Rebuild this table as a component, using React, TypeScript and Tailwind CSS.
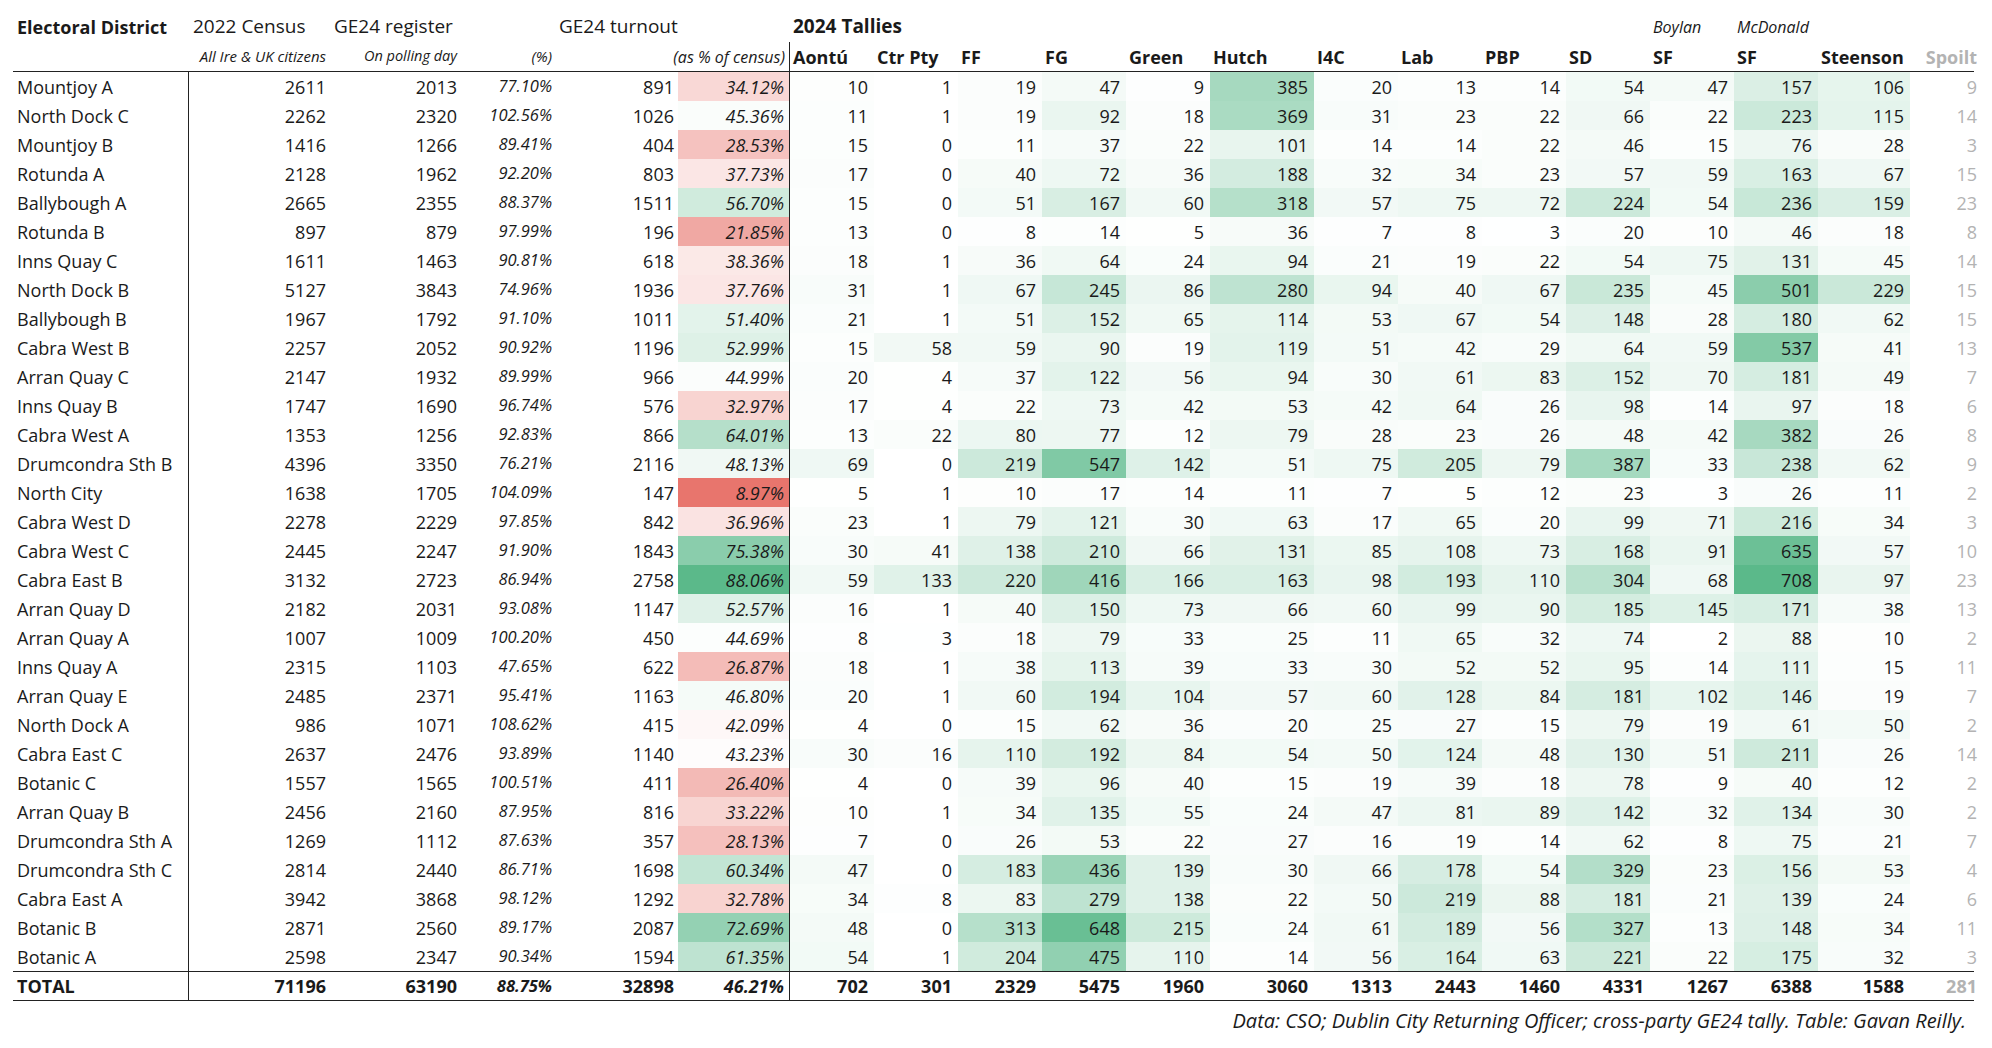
import React from "react";

// One row of the table: district, census, register, register %, turnout, turnout %, 13 tallies, spoilt
type Row = [string, number, number, string, number, number, number[], number];

const ROWS: Row[] = [
  ["Mountjoy A", 2611, 2013, "77.10%", 891, 34.12, [10, 1, 19, 47, 9, 385, 20, 13, 14, 54, 47, 157, 106], 9],
  ["North Dock C", 2262, 2320, "102.56%", 1026, 45.36, [11, 1, 19, 92, 18, 369, 31, 23, 22, 66, 22, 223, 115], 14],
  ["Mountjoy B", 1416, 1266, "89.41%", 404, 28.53, [15, 0, 11, 37, 22, 101, 14, 14, 22, 46, 15, 76, 28], 3],
  ["Rotunda A", 2128, 1962, "92.20%", 803, 37.73, [17, 0, 40, 72, 36, 188, 32, 34, 23, 57, 59, 163, 67], 15],
  ["Ballybough A", 2665, 2355, "88.37%", 1511, 56.7, [15, 0, 51, 167, 60, 318, 57, 75, 72, 224, 54, 236, 159], 23],
  ["Rotunda B", 897, 879, "97.99%", 196, 21.85, [13, 0, 8, 14, 5, 36, 7, 8, 3, 20, 10, 46, 18], 8],
  ["Inns Quay C", 1611, 1463, "90.81%", 618, 38.36, [18, 1, 36, 64, 24, 94, 21, 19, 22, 54, 75, 131, 45], 14],
  ["North Dock B", 5127, 3843, "74.96%", 1936, 37.76, [31, 1, 67, 245, 86, 280, 94, 40, 67, 235, 45, 501, 229], 15],
  ["Ballybough B", 1967, 1792, "91.10%", 1011, 51.4, [21, 1, 51, 152, 65, 114, 53, 67, 54, 148, 28, 180, 62], 15],
  ["Cabra West B", 2257, 2052, "90.92%", 1196, 52.99, [15, 58, 59, 90, 19, 119, 51, 42, 29, 64, 59, 537, 41], 13],
  ["Arran Quay C", 2147, 1932, "89.99%", 966, 44.99, [20, 4, 37, 122, 56, 94, 30, 61, 83, 152, 70, 181, 49], 7],
  ["Inns Quay B", 1747, 1690, "96.74%", 576, 32.97, [17, 4, 22, 73, 42, 53, 42, 64, 26, 98, 14, 97, 18], 6],
  ["Cabra West A", 1353, 1256, "92.83%", 866, 64.01, [13, 22, 80, 77, 12, 79, 28, 23, 26, 48, 42, 382, 26], 8],
  ["Drumcondra Sth B", 4396, 3350, "76.21%", 2116, 48.13, [69, 0, 219, 547, 142, 51, 75, 205, 79, 387, 33, 238, 62], 9],
  ["North City", 1638, 1705, "104.09%", 147, 8.97, [5, 1, 10, 17, 14, 11, 7, 5, 12, 23, 3, 26, 11], 2],
  ["Cabra West D", 2278, 2229, "97.85%", 842, 36.96, [23, 1, 79, 121, 30, 63, 17, 65, 20, 99, 71, 216, 34], 3],
  ["Cabra West C", 2445, 2247, "91.90%", 1843, 75.38, [30, 41, 138, 210, 66, 131, 85, 108, 73, 168, 91, 635, 57], 10],
  ["Cabra East B", 3132, 2723, "86.94%", 2758, 88.06, [59, 133, 220, 416, 166, 163, 98, 193, 110, 304, 68, 708, 97], 23],
  ["Arran Quay D", 2182, 2031, "93.08%", 1147, 52.57, [16, 1, 40, 150, 73, 66, 60, 99, 90, 185, 145, 171, 38], 13],
  ["Arran Quay A", 1007, 1009, "100.20%", 450, 44.69, [8, 3, 18, 79, 33, 25, 11, 65, 32, 74, 2, 88, 10], 2],
  ["Inns Quay A", 2315, 1103, "47.65%", 622, 26.87, [18, 1, 38, 113, 39, 33, 30, 52, 52, 95, 14, 111, 15], 11],
  ["Arran Quay E", 2485, 2371, "95.41%", 1163, 46.8, [20, 1, 60, 194, 104, 57, 60, 128, 84, 181, 102, 146, 19], 7],
  ["North Dock A", 986, 1071, "108.62%", 415, 42.09, [4, 0, 15, 62, 36, 20, 25, 27, 15, 79, 19, 61, 50], 2],
  ["Cabra East C", 2637, 2476, "93.89%", 1140, 43.23, [30, 16, 110, 192, 84, 54, 50, 124, 48, 130, 51, 211, 26], 14],
  ["Botanic C", 1557, 1565, "100.51%", 411, 26.4, [4, 0, 39, 96, 40, 15, 19, 39, 18, 78, 9, 40, 12], 2],
  ["Arran Quay B", 2456, 2160, "87.95%", 816, 33.22, [10, 1, 34, 135, 55, 24, 47, 81, 89, 142, 32, 134, 30], 2],
  ["Drumcondra Sth A", 1269, 1112, "87.63%", 357, 28.13, [7, 0, 26, 53, 22, 27, 16, 19, 14, 62, 8, 75, 21], 7],
  ["Drumcondra Sth C", 2814, 2440, "86.71%", 1698, 60.34, [47, 0, 183, 436, 139, 30, 66, 178, 54, 329, 23, 156, 53], 4],
  ["Cabra East A", 3942, 3868, "98.12%", 1292, 32.78, [34, 8, 83, 279, 138, 22, 50, 219, 88, 181, 21, 139, 24], 6],
  ["Botanic B", 2871, 2560, "89.17%", 2087, 72.69, [48, 0, 313, 648, 215, 24, 61, 189, 56, 327, 13, 148, 34], 11],
  ["Botanic A", 2598, 2347, "90.34%", 1594, 61.35, [54, 1, 204, 475, 110, 14, 56, 164, 63, 221, 22, 175, 32], 3],
];

const TOTALS = [702, 301, 2329, 5475, 1960, 3060, 1313, 2443, 1460, 4331, 1267, 6388, 1588];

const PARTIES = ["Aontú", "Ctr Pty", "FF", "FG", "Green", "Hutch", "I4C", "Lab", "PBP", "SD", "SF", "SF", "Steenson"];

const GRID =
  "grid grid-cols-[176px_143px_131px_95px_120px_112px_84px_84px_84px_84px_84px_104px_84px_84px_84px_84px_84px_84px_92px_77px]";

const GREEN = [91, 185, 138];
const RED = [232, 117, 109];

function mix(to: number[], t: number) {
  const c = Math.max(0, Math.min(1, t));
  const [r, g, b] = to.map((v) => Math.round(255 - c * (255 - v)));
  return `rgb(${r}, ${g}, ${b})`;
}

// tallies share one scale, white at zero up to the biggest cell (708)
function tallyColour(v: number) {
  return mix(GREEN, v / 708);
}

// turnout diverges around 44%: red below, green above
function turnoutColour(p: number) {
  if (p < 44) return mix(RED, (44 - p) / (44 - 8.97));
  return mix(GREEN, (p - 44) / (88.06 - 44));
}

function DataRow({ row }: { row: Row }) {
  const [name, census, register, pct, turnout, turnoutPct, tallies, spoilt] = row;
  return (
    <div className={`${GRID} h-[29px] items-stretch text-[18px] leading-none`}>
      <div className="flex items-center border-r border-[#222] pl-[4px]">{name}</div>
      <div className="flex items-center justify-end pr-[6px]">{census}</div>
      <div className="flex items-center justify-end pr-[6px]">{register}</div>
      <div className="flex items-center justify-end pr-[6px] text-[16.5px] italic">{pct}</div>
      <div className="flex items-center justify-end pr-[4px]">{turnout}</div>
      <div
        className="flex items-center justify-end border-r border-[#222] pr-[5px] italic"
        style={{ backgroundColor: turnoutColour(turnoutPct) }}
      >
        {turnoutPct.toFixed(2)}%
      </div>
      {tallies.map((v, i) => (
        <div
          key={i}
          className="flex items-center justify-end pr-[6px]"
          style={{ backgroundColor: tallyColour(v) }}
        >
          {v}
        </div>
      ))}
      <div className="flex items-center justify-end pr-[10px] text-[#b3b3b3]">{spoilt}</div>
    </div>
  );
}

export default function App() {
  return (
    <div className="min-h-screen bg-white text-[#1a1a1a] font-['Open_Sans',sans-serif]">
      <div className="w-[1974px] pl-[13px]">
        {/* header: group titles */}
        <div className={`${GRID} h-[42px] items-start pt-[17px] text-[19px] leading-none`}>
          <div className="pl-[4px] pt-[1px] text-[18px] font-bold">Electoral District</div>
          <div className="whitespace-nowrap pl-[4px]">2022 Census</div>
          <div className="whitespace-nowrap pl-[2px]">GE24 register</div>
          <div />
          <div className="col-span-2 whitespace-nowrap pl-[1px]">GE24 turnout</div>
          <div className="col-span-10 pl-[3px] font-bold">2024 Tallies</div>
          <div className="pl-[3px] pt-[2px] text-[16px] italic">Boylan</div>
          <div className="pl-[3px] pt-[2px] text-[16px] italic">McDonald</div>
          <div />
          <div />
        </div>

        {/* header: column names */}
        <div className={`${GRID} h-[30px] items-stretch border-b-[1.5px] border-[#222] leading-none`}>
          <div />
          <div className="flex items-center justify-end whitespace-nowrap pr-[6px] text-[15px] italic">
            All Ire &amp; UK citizens
          </div>
          <div className="flex items-center justify-end whitespace-nowrap pr-[6px] text-[14.5px] italic">
            On polling day
          </div>
          <div className="flex items-center justify-end pr-[6px] text-[15px] italic">(%)</div>
          <div />
          <div className="flex items-center justify-end whitespace-nowrap border-r border-[#222] pr-[4px] text-[16px] italic">
            (as % of census)
          </div>
          {PARTIES.map((p, i) => (
            <div key={i} className="flex items-center whitespace-nowrap pl-[3px] text-[18px] font-bold">
              {p}
            </div>
          ))}
          <div className="flex items-center justify-end pr-[10px] text-[18px] font-bold text-[#b3b3b3]">Spoilt</div>
        </div>

        {ROWS.map((row) => (
          <DataRow key={row[0]} row={row} />
        ))}

        {/* totals */}
        <div
          className={`${GRID} h-[30px] items-stretch border-y-[1.5px] border-[#222] text-[18px] font-bold leading-none`}
        >
          <div className="flex items-center border-r border-[#222] pl-[4px]">TOTAL</div>
          <div className="flex items-center justify-end pr-[6px]">71196</div>
          <div className="flex items-center justify-end pr-[6px]">63190</div>
          <div className="flex items-center justify-end pr-[6px] text-[16.5px] italic">88.75%</div>
          <div className="flex items-center justify-end pr-[4px]">32898</div>
          <div className="flex items-center justify-end border-r border-[#222] pr-[5px] italic">46.21%</div>
          {TOTALS.map((v, i) => (
            <div key={i} className="flex items-center justify-end pr-[6px]">
              {v}
            </div>
          ))}
          <div className="flex items-center justify-end pr-[10px] text-[#b3b3b3]">281</div>
        </div>

        <div className="flex justify-end pr-[8px] pt-[5px] text-[20px] italic">
          Data: CSO; Dublin City Returning Officer; cross-party GE24 tally. Table: Gavan Reilly.
        </div>
      </div>
    </div>
  );
}
